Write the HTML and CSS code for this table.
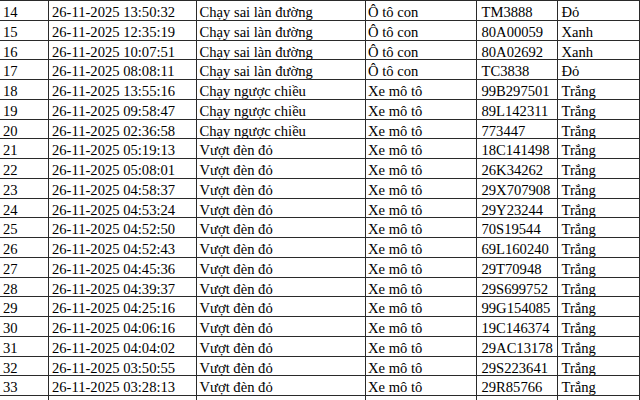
FILE: index.html
```html
<!DOCTYPE html>
<html lang="vi">
<head>
<meta charset="utf-8">
<title>Danh sách vi phạm</title>
<link rel="stylesheet" href="styles.css">
</head>
<body>
<div class="sheet">
  <div class="row"><div class="c">13</div><div class="c"></div><div class="c">Chạy sai làn đường</div><div class="c">Ô tô con</div><div class="c"></div><div class="c">Trắng</div></div>
  <div class="row"><div class="c">14</div><div class="c">26-11-2025 13:50:32</div><div class="c">Chạy sai làn đường</div><div class="c">Ô tô con</div><div class="c">TM3888</div><div class="c">Đỏ</div></div>
  <div class="row"><div class="c">15</div><div class="c">26-11-2025 12:35:19</div><div class="c">Chạy sai làn đường</div><div class="c">Ô tô con</div><div class="c">80A00059</div><div class="c">Xanh</div></div>
  <div class="row"><div class="c">16</div><div class="c">26-11-2025 10:07:51</div><div class="c">Chạy sai làn đường</div><div class="c">Ô tô con</div><div class="c">80A02692</div><div class="c">Xanh</div></div>
  <div class="row"><div class="c">17</div><div class="c">26-11-2025 08:08:11</div><div class="c">Chạy sai làn đường</div><div class="c">Ô tô con</div><div class="c">TC3838</div><div class="c">Đỏ</div></div>
  <div class="row"><div class="c">18</div><div class="c">26-11-2025 13:55:16</div><div class="c">Chạy ngược chiều</div><div class="c">Xe mô tô</div><div class="c">99B297501</div><div class="c">Trắng</div></div>
  <div class="row"><div class="c">19</div><div class="c">26-11-2025 09:58:47</div><div class="c">Chạy ngược chiều</div><div class="c">Xe mô tô</div><div class="c">89L142311</div><div class="c">Trắng</div></div>
  <div class="row"><div class="c">20</div><div class="c">26-11-2025 02:36:58</div><div class="c">Chạy ngược chiều</div><div class="c">Xe mô tô</div><div class="c">773447</div><div class="c">Trắng</div></div>
  <div class="row"><div class="c">21</div><div class="c">26-11-2025 05:19:13</div><div class="c">Vượt đèn đỏ</div><div class="c">Xe mô tô</div><div class="c">18C141498</div><div class="c">Trắng</div></div>
  <div class="row"><div class="c">22</div><div class="c">26-11-2025 05:08:01</div><div class="c">Vượt đèn đỏ</div><div class="c">Xe mô tô</div><div class="c">26K34262</div><div class="c">Trắng</div></div>
  <div class="row"><div class="c">23</div><div class="c">26-11-2025 04:58:37</div><div class="c">Vượt đèn đỏ</div><div class="c">Xe mô tô</div><div class="c">29X707908</div><div class="c">Trắng</div></div>
  <div class="row"><div class="c">24</div><div class="c">26-11-2025 04:53:24</div><div class="c">Vượt đèn đỏ</div><div class="c">Xe mô tô</div><div class="c">29Y23244</div><div class="c">Trắng</div></div>
  <div class="row"><div class="c">25</div><div class="c">26-11-2025 04:52:50</div><div class="c">Vượt đèn đỏ</div><div class="c">Xe mô tô</div><div class="c">70S19544</div><div class="c">Trắng</div></div>
  <div class="row"><div class="c">26</div><div class="c">26-11-2025 04:52:43</div><div class="c">Vượt đèn đỏ</div><div class="c">Xe mô tô</div><div class="c">69L160240</div><div class="c">Trắng</div></div>
  <div class="row"><div class="c">27</div><div class="c">26-11-2025 04:45:36</div><div class="c">Vượt đèn đỏ</div><div class="c">Xe mô tô</div><div class="c">29T70948</div><div class="c">Trắng</div></div>
  <div class="row"><div class="c">28</div><div class="c">26-11-2025 04:39:37</div><div class="c">Vượt đèn đỏ</div><div class="c">Xe mô tô</div><div class="c">29S699752</div><div class="c">Trắng</div></div>
  <div class="row"><div class="c">29</div><div class="c">26-11-2025 04:25:16</div><div class="c">Vượt đèn đỏ</div><div class="c">Xe mô tô</div><div class="c">99G154085</div><div class="c">Trắng</div></div>
  <div class="row"><div class="c">30</div><div class="c">26-11-2025 04:06:16</div><div class="c">Vượt đèn đỏ</div><div class="c">Xe mô tô</div><div class="c">19C146374</div><div class="c">Trắng</div></div>
  <div class="row"><div class="c">31</div><div class="c">26-11-2025 04:04:02</div><div class="c">Vượt đèn đỏ</div><div class="c">Xe mô tô</div><div class="c">29AC13178</div><div class="c">Trắng</div></div>
  <div class="row"><div class="c">32</div><div class="c">26-11-2025 03:50:55</div><div class="c">Vượt đèn đỏ</div><div class="c">Xe mô tô</div><div class="c">29S223641</div><div class="c">Trắng</div></div>
  <div class="row"><div class="c">33</div><div class="c">26-11-2025 03:28:13</div><div class="c">Vượt đèn đỏ</div><div class="c">Xe mô tô</div><div class="c">29R85766</div><div class="c">Trắng</div></div>
  <div class="row"><div class="c">34</div><div class="c"></div><div class="c">Vượt đèn đỏ</div><div class="c">Xe mô tô</div><div class="c"></div><div class="c">Trắng</div></div>
</div>
</body>
</html>
```
FILE: styles.css
```css
html, body {
  margin: 0;
  padding: 0;
  background: #fff;
}
body {
  width: 640px;
  height: 400px;
  overflow: hidden;
  font-family: "Liberation Serif", "Times New Roman", serif;
  font-size: 14.6px;
  color: #000;
}
.sheet {
  margin-top: -18.75px;
}
.row {
  display: grid;
  grid-template-columns: 49px 148px 169px 111px 81px 82px;
  height: 19.75px;
  box-sizing: border-box;
  border-bottom: 1px solid #2a2a2a;
}
.c {
  box-sizing: border-box;
  border-right: 1px solid #2a2a2a;
  padding-top: 3px;
  line-height: 16px;
  white-space: nowrap;
  overflow: visible;
}
.c:nth-child(1) { padding-left: 3px; }
.c:nth-child(2) { padding-left: 3px; }
.c:nth-child(3) { padding-left: 2.5px; }
.c:nth-child(4) { padding-left: 2px; }
.c:nth-child(5) { padding-left: 4.5px; }
.c:nth-child(6) { padding-left: 3.5px; }
```
